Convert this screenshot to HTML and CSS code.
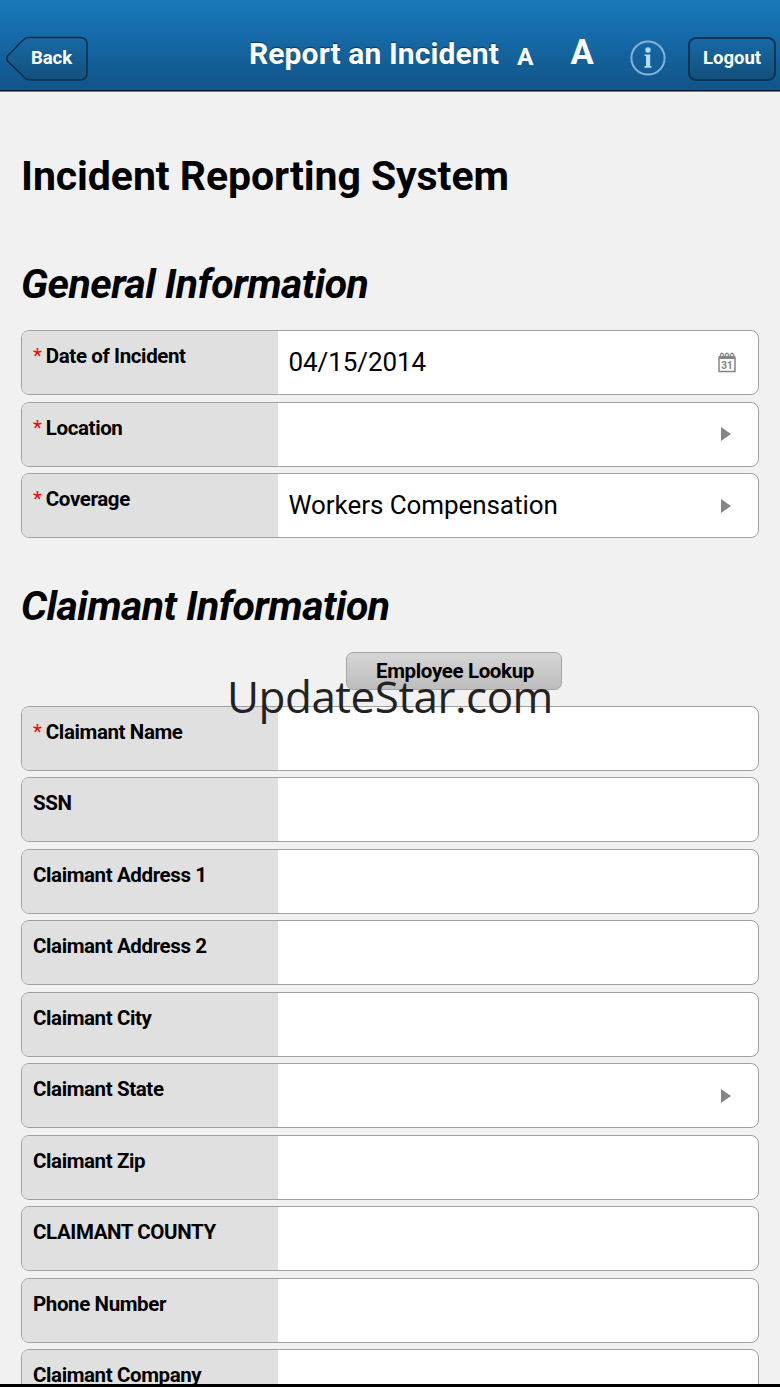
FILE: index.html
```html
<!DOCTYPE html>
<html lang="en">
  <head>
    <meta charset="UTF-8" />
    <meta name="viewport" content="width=device-width, initial-scale=1.0" />
    <title>Report an Incident</title>
    <link rel="stylesheet" href="styles.css">
  </head>
  <body>
    <header class="toolbar">
      <button class="back">
        <svg class="back-shape" width="82" height="45" viewBox="0 0 82 45">
          <defs>
            <linearGradient id="backFill" x1="0" y1="0" x2="0" y2="1">
              <stop offset="0" stop-color="#176aa6" />
              <stop offset="1" stop-color="#134f7b" />
            </linearGradient>
          </defs>
          <path d="M22 1.500H74Q81 1.500 81 8.500V37Q81 44 74 44H24Q21 44 19 42L1.500 25Q0 22.500 1.500 20L17 4Q19.500 1.500 22 1.500Z" fill="url(#backFill)" stroke="#092e50" stroke-width="1.500" />
        </svg>
        <span class="back-text">Back</span>
      </button>
      <h1 class="toolbar-title">Report an Incident</h1>
      <span class="font-small">A</span>
      <span class="font-large">A</span>
      <svg class="info" width="36" height="36" viewBox="0 0 36 36" fill="none">
        <circle cx="18" cy="18" r="16.600" stroke="#7fb4dc" stroke-width="2" />
        <circle cx="18" cy="10" r="2.700" fill="#b5dbf5" />
        <path d="M14.500 14.500H20.200V26H21.500V27.700H14.500V26H16V16H14.500Z" fill="#b5dbf5" />
      </svg>
      <button class="logout">Logout</button>
    </header>

    <main class="container">
      <h2 class="page-title">Incident Reporting System</h2>

      <h3 class="section-title">General Information</h3>
      <div class="form">
        <div class="field">
          <div class="label"><span class="required">*</span>Date of Incident</div>
          <div class="value">
            <span class="value-text">04/15/2014</span>
            <svg class="calendar" width="18" height="21" viewBox="0 0 18 21" fill="none" stroke="#858585">
              <path d="M1 6V19.500H17V6" stroke-width="1.500" />
              <path d="M0.500 5.500H17.500" stroke-width="3" />
              <path d="M2.500 5V2.500Q4 0 5.500 2.500V5M7.500 5V2.500Q9 0 10.500 2.500V5M12.500 5V2.500Q14 0 15.500 2.500V5" stroke-width="1.300" />
              <text x="9" y="16.500" text-anchor="middle" class="calendar-day">31</text>
            </svg>
          </div>
        </div>
        <div class="field">
          <div class="label"><span class="required">*</span>Location</div>
          <div class="value"><i class="arrow"></i></div>
        </div>
        <div class="field">
          <div class="label"><span class="required">*</span>Coverage</div>
          <div class="value"><span class="value-text">Workers Compensation</span><i class="arrow"></i></div>
        </div>
      </div>

      <h3 class="section-title claimant-title">Claimant Information</h3>
      <button class="lookup">Employee Lookup</button>
      <div class="form">
        <div class="field">
          <div class="label"><span class="required">*</span>Claimant Name</div>
          <div class="value"></div>
        </div>
        <div class="field">
          <div class="label">SSN</div>
          <div class="value"></div>
        </div>
        <div class="field">
          <div class="label">Claimant Address 1</div>
          <div class="value"></div>
        </div>
        <div class="field">
          <div class="label">Claimant Address 2</div>
          <div class="value"></div>
        </div>
        <div class="field">
          <div class="label">Claimant City</div>
          <div class="value"></div>
        </div>
        <div class="field">
          <div class="label">Claimant State</div>
          <div class="value"><i class="arrow"></i></div>
        </div>
        <div class="field">
          <div class="label">Claimant Zip</div>
          <div class="value"></div>
        </div>
        <div class="field">
          <div class="label">CLAIMANT COUNTY</div>
          <div class="value"></div>
        </div>
        <div class="field">
          <div class="label">Phone Number</div>
          <div class="value"></div>
        </div>
        <div class="field">
          <div class="label">Claimant Company</div>
          <div class="value"></div>
        </div>
      </div>
    </main>

    <div class="watermark">UpdateStar.com</div>
  </body>
</html>
```
FILE: styles.css
```css
* {
  box-sizing: border-box;
}
body {
  position: relative;
  height: 1387px;
  margin: 0;
  overflow: hidden;
  border-bottom: 3px solid #000;
  background-color: #f1f1f1;
  color: #000;
  font-family: Roboto, sans-serif;
  display: flex;
  flex-direction: column;
}
button {
  font-family: inherit;
  font-weight: bold;
  padding: 0;
  border: none;
  cursor: pointer;
}

/* toolbar */
.toolbar {
  display: flex;
  align-items: flex-start;
  flex: none;
  height: 91px;
  padding: 36px 4px 0 6px;
  background: linear-gradient(#1779bc, #125489);
  border-bottom: 1px solid #07111b;
  box-shadow: 0 1px 0 #777;
  color: #fff;
}
.back {
  position: relative;
  width: 82px;
  height: 45px;
  background: none;
  color: #fff;
  font-size: 18.500px;
}
.back-shape {
  position: absolute;
  left: 0;
  top: 0;
}
.back-text {
  position: relative;
  left: 4.500px;
  top: -1px;
}
.toolbar-title {
  width: 251px;
  margin: 0 0 0 161px;
  font-size: 30px;
  line-height: 36px;
  letter-spacing: 0.1px;
  white-space: nowrap;
  text-shadow: 0 -1px 1px #0b3557;
}
.font-small {
  width: 16px;
  margin: 5px 0 0 17px;
  font-size: 24.500px;
  line-height: 32px;
  font-weight: bold;
}
.font-large {
  width: 23px;
  margin: -4px 0 0 37.500px;
  font-size: 34.500px;
  line-height: 40px;
  font-weight: bold;
}
.info {
  margin: 4px 0 0 36.500px;
}
.logout {
  width: 88px;
  height: 44px;
  margin: 1px 0 0 auto;
  padding-bottom: 2px;
  border: 2px solid #0c3459;
  border-radius: 8px;
  background: linear-gradient(#176aa6, #134f7b);
  color: #fff;
  font-size: 18.500px;
}

/* form */
.container {
  flex: 1;
  min-height: 0;
  overflow: hidden;
  padding: 61px 21px 0;
}
.page-title,
.section-title {
  margin: 0;
  font-size: 41px;
  line-height: 48px;
  letter-spacing: -0.080px;
  white-space: nowrap;
}
.section-title {
  margin: 59.500px 0 22.900px;
  font-style: italic;
  letter-spacing: -0.550px;
}
.claimant-title {
  margin: 43.600px 0 22.500px;
}
.form {
  display: flex;
  flex-direction: column;
  gap: 6.480px;
}
.field {
  display: flex;
  height: 65px;
  border: 1.500px solid #a0a0a0;
  border-radius: 8px;
  background-color: #fff;
  overflow: hidden;
}
.label {
  width: 255.500px;
  padding: 13px 0 0 11px;
  background-color: #e0e0e0;
  font-size: 20.500px;
  line-height: 24px;
  font-weight: bold;
  letter-spacing: -0.390px;
  white-space: nowrap;
}
.required {
  margin-right: 4px;
  color: #f00;
  font-weight: normal;
  letter-spacing: 0;
}
.value {
  display: flex;
  flex: 1;
  align-items: center;
  justify-content: space-between;
  padding: 0 22px 0 11px;
  font-size: 26px;
  letter-spacing: -0.070px;
  white-space: nowrap;
}
.value-text {
  padding-bottom: 2px;
}
.calendar-day {
  font-size: 10px;
  font-weight: bold;
  letter-spacing: 0;
  fill: #858585;
  stroke: none;
}
.arrow {
  margin: 0 5px 0 auto;
  border-left: 10px solid #858585;
  border-top: 7.500px solid transparent;
  border-bottom: 7.500px solid transparent;
}
.lookup {
  display: block;
  width: 216px;
  height: 38px;
  margin: 0 0 15.500px 325px;
  padding: 0 0 1px 2px;
  border: 1.500px solid #a5a5a5;
  border-radius: 7px;
  background: linear-gradient(#d6d6d6, #bdbdbd);
  color: #000;
  font-size: 20.500px;
  letter-spacing: -0.350px;
}

/* overlay mark */
.watermark {
  position: absolute;
  left: 227px;
  top: 666px;
  color: #222;
  font-family: "Open Sans", sans-serif;
  font-size: 44px;
  line-height: 60px;
  letter-spacing: -0.500px;
  white-space: nowrap;
}
```
